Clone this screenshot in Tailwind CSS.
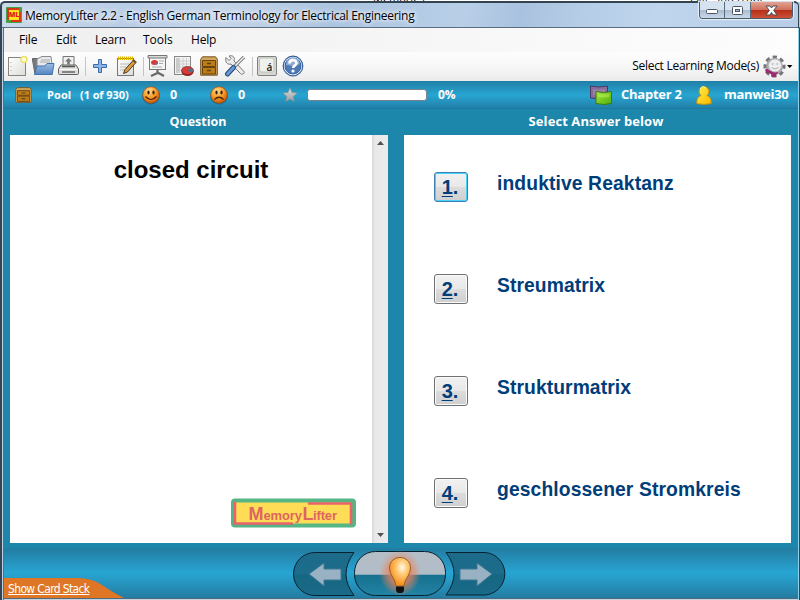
<!DOCTYPE html>
<html lang="en">
<head>
<meta charset="utf-8">
<title>MemoryLifter 2.2</title>
<script src="https://cdn.jsdelivr.net/npm/@tailwindcss/browser@4"></script>
</head>
<body class="w-[800px] h-[600px] overflow-hidden bg-white font-['Open_Sans','Noto_Sans',sans-serif] text-xs text-black">
<svg class="absolute w-0 h-0" width="0" height="0">
  <defs>
    <linearGradient id="paper" x1="0" y1="0" x2="1" y2="1"><stop offset="0" stop-color="#fff"/><stop offset="1" stop-color="#dcdcd8"/></linearGradient>
    <linearGradient id="blue" x1="0" y1="0" x2="0" y2="1"><stop offset="0" stop-color="#9dbde4"/><stop offset="1" stop-color="#5584c0"/></linearGradient>
    <radialGradient id="face" cx=".4" cy=".25" r=".75"><stop offset="0" stop-color="#ffd98a"/><stop offset=".55" stop-color="#f69a26"/><stop offset="1" stop-color="#c85a08"/></radialGradient>
    <linearGradient id="star" x1="0" y1="0" x2="0" y2="1"><stop offset="0" stop-color="#e0e0e0"/><stop offset="1" stop-color="#969a9e"/></linearGradient>
    <linearGradient id="gold" x1="0" y1="0" x2="1" y2="1"><stop offset="0" stop-color="#fff04a"/><stop offset="1" stop-color="#f8b800"/></linearGradient>
    <linearGradient id="green" x1="0" y1="0" x2="1" y2="1"><stop offset="0" stop-color="#a4e83a"/><stop offset="1" stop-color="#4fae0c"/></linearGradient>
    <radialGradient id="bulb" cx=".6" cy=".35" r=".6"><stop offset="0" stop-color="#fffbe8"/><stop offset=".4" stop-color="#ffcc7c"/><stop offset="1" stop-color="#f8921c"/></radialGradient>
    <radialGradient id="glow"><stop offset="0" stop-color="#ff8a50" stop-opacity="1"/><stop offset=".55" stop-color="#f08058" stop-opacity=".7"/><stop offset="1" stop-color="#e88a60" stop-opacity="0"/></radialGradient>
    <linearGradient id="side" x1="0" y1="0" x2="0" y2="1"><stop offset="0" stop-color="#1d6a89"/><stop offset=".5" stop-color="#1c6c8c"/><stop offset=".52" stop-color="#166782"/><stop offset="1" stop-color="#1a6a89"/></linearGradient>
    <linearGradient id="mid" x1="0" y1="0" x2="0" y2="1"><stop offset="0" stop-color="#b4bec6"/><stop offset=".52" stop-color="#b0bcc8"/><stop offset=".53" stop-color="#17708f"/><stop offset="1" stop-color="#2283a4"/></linearGradient>
    <symbol id="cabinet" viewBox="0 0 18 20" preserveAspectRatio="none">
      <path d="M2.5.8h13l1.800 2.400v16H.7v-16z" fill="#d0a75e" stroke="#76521c"/>
      <path d="M2.500 4.500h13v6h-13zM2.500 11.500h13v6.500h-13z" fill="#bd7c16" stroke="#67430f"/>
      <path d="M7 7.500h4M7 14.500h4" stroke="#5d4520" stroke-width="1.500"/>
    </symbol>
  </defs>
</svg>
<div class="w-[800px] h-[600px] flex flex-col bg-[#c4d6ea]">
  <!-- Title bar -->
  <div class="relative h-[28px] shrink-0 border-b border-[#5b6c80] bg-[linear-gradient(100deg,#cbd9e9_0%,#b9cde6_16%,#c5d5e9_28%,#abc4e0_42%,#b9cfe8_58%,#a9c2df_65%,#b5cce6_72%,#bfd5ee_82%,#b7cde7_100%)]">
    <div class="h-[2px] overflow-hidden bg-white relative">
      <span class="absolute left-[373px] -top-[8px] text-[11px] leading-none">Memories</span>
      <span class="absolute left-[690px] -top-[8px] text-[11px] leading-none">Exit &nbsp; Interrupt</span>
    </div>
    <div class="absolute left-0 top-[1px] w-[799px] h-[27px] rounded-t-[5px] border-t-2 border-l-2 border-r border-[#344350]"></div>
    <div class="flex items-center h-[25px] pl-[6px] pt-[3px]">
      <svg class="-mt-[2px]" width="16" height="16" viewBox="0 0 16 16"><rect width="16" height="16" rx="1" fill="#43a047"/><path d="M1 1h12v2H3v10H1z" fill="#d93416"/><path d="M13 5h2v10H5v-2h8z" fill="#d93416"/><path d="M3 3h10v10H3z" fill="#ffe01c"/><text x="2.800" y="10" font-family="Open Sans" font-size="6.800" font-weight="800" fill="#e02010">ML</text></svg>
      <span class="ml-[3px] whitespace-nowrap text-[12px] tracking-[-0.27px] [text-shadow:0_0_4px_#fff,0_0_6px_#fff]">MemoryLifter 2.2 - English German Terminology for Electrical Engineering</span>
    </div>
    <div class="absolute left-[699px] top-[2px] w-[94px] h-[17px] flex rounded-b-[4px] border border-t-0 border-[#4c5a69] overflow-hidden shadow-[0_0_1px_1px_#e8f1fa]">
      <div class="w-[25px] flex items-center justify-center border-r border-[#5b6a7b] bg-[linear-gradient(#d6e2ef_0_48%,#a9bccf_50%,#c8d9e9)]"><svg width="14" height="7" class="mt-[3px]"><rect x="1.500" y="1.500" width="11" height="4" rx="1" fill="#fff" stroke="#4c5565"/></svg></div>
      <div class="w-[26px] flex items-center justify-center border-r border-[#5b6a7b] bg-[linear-gradient(#d6e2ef_0_48%,#a9bccf_50%,#c8d9e9)]"><svg width="13" height="11"><rect x="1.500" y="1.500" width="10" height="8" rx="1" fill="#fff" stroke="#4c5565"/><rect x="4.500" y="4.500" width="4" height="2" fill="#a9bccf" stroke="#4c5565"/></svg></div>
      <div class="flex-1 flex items-center justify-center bg-[linear-gradient(#e2a393_0%,#cf705c_48%,#b52e19_50%,#cc5136)]"><svg width="13" height="11" viewBox="0 0 13 11"><path d="M1 1h4l1.500 2L8 1h4L8.700 5.400 12 10H8L6.500 7.500 5 10H1l3.300-4.600z" fill="#fff" stroke="#54494f"/></svg></div>
    </div>
  </div>

  <div class="flex-1 flex min-h-0">
    <div class="w-[4px] shrink-0 border-l-2 border-[#354452] bg-[#bfd0e3] border-r border-r-[#5b6c80]"></div>
    <div class="w-[794px] flex flex-col">
      <!-- Menu -->
      <div class="h-[24px] flex items-center bg-[linear-gradient(90deg,#efefef,#fdfdfd)] text-[12px]">
        <span class="ml-[15px] w-[37px] tracking-[-0.2px]">File</span><span class="w-[39px] tracking-[-0.2px]">Edit</span><span class="w-[48px] tracking-[-0.2px]">Learn</span><span class="w-[48px]">Tools</span><span class="tracking-[-0.2px]">Help</span>
      </div>
      <!-- Toolbar -->
      <div class="h-[29px] flex items-center bg-[linear-gradient(#fdfdfd,#f7f7f7_50%,#ebebeb)]">
        <svg class="ml-[3px] -mt-px" width="22" height="22" viewBox="0 0 22 22"><rect x="1.500" y="2.500" width="17" height="18" fill="url(#paper)" stroke="#858580"/><path d="M4 7v1M4 11v1M4 15v1" stroke="#aaa"/><circle cx="17" cy="4.500" r="3" fill="#fffbd0" stroke="#eedf67" stroke-width="1.400"/></svg>
        <svg class="ml-[2px] -mt-[2px]" width="24" height="22" viewBox="0 0 24 22"><path d="M1.500 5V3.500H8L10 5v14H4z" fill="#777b7e" stroke="#62666a"/><path d="M6 14V4l5-2.500h9l1 8" fill="#e7e9eb" stroke="#8a8d90"/><path d="M9 7h10M10 5h9" stroke="#aaa"/><path d="M3.500 19.500L6 11h8l2-2.500h7l-1.800 11z" fill="url(#blue)" stroke="#4472ab"/></svg>
        <svg class="ml-[3px] -mt-px" width="22" height="22" viewBox="0 0 22 22"><path d="M5 12V1.500h11V12" fill="#f0f0ee" stroke="#777"/><path d="M10.500 3l3.500 3.500h-2.200v3H9.200v-3H7z" fill="#777"/><path d="M3 10h15l2.500 4v4.500q0 1-1 1h-18q-1 0-1-1V14z" fill="#dededc" stroke="#626262"/><path d="M4 11.500h13" stroke="#555" stroke-width="1.500"/><path d="M1.500 14.500h18" stroke="#f8f8f8"/><path d="M4 17h13" stroke="#858585" stroke-width="2"/></svg>
        <i class="ml-[5px] w-px h-[19px] bg-[#c4c4c4]"></i>
        <svg class="ml-[7px] -mt-px" width="16" height="16" viewBox="0 0 16 16"><path d="M5.500 1.500h3v5h5v3h-5v5h-3v-5h-5v-3h5z" fill="#8eb5e5" stroke="#3d6ba9"/></svg>
        <svg class="ml-[7px] -mt-[2px]" width="22" height="22" viewBox="0 0 22 22"><rect x="1.500" y="3.500" width="16" height="17" fill="url(#paper)" stroke="#777"/><path d="M2.500 5V1.500M4.500 5V1.500M6.500 5V1.500M8.500 5V1.500M10.500 5V1.500M12.500 5V1.500M14.500 5V1.500M16.500 5V1.500" stroke="#e0b800" stroke-width="1.200"/><path d="M4 9h9M4 12h6M4 15h5" stroke="#bbb"/><path d="M17.500 5l2.500 2.500L11.500 17l-4 1.500L9 14.500z" fill="#d79b43" stroke="#50371c"/><path d="M17 5l3 2.500" stroke="#6b4a2a" stroke-width="2"/></svg>
        <i class="ml-[5px] w-px h-[19px] bg-[#c4c4c4]"></i>
        <svg class="ml-[3px] -mt-px" width="22" height="22" viewBox="0 0 22 22"><path d="M10.500 14v4L4 21M10.500 17.500l6.500 3.500" stroke="#686a66" stroke-width="2.200" fill="none"/><rect x="2.500" y="2.500" width="16" height="12" fill="#f5f5f3" stroke="#777"/><path d="M1 .5h19v2.500H1z" fill="#d9d9d7" stroke="#777"/><ellipse cx="7.500" cy="7.500" rx="3.500" ry="2.500" fill="#d63a36"/><path d="M7.500 7.500l3.500 1-2 1.500z" fill="#4d79bb"/><path d="M12 6h5M12 8.500h4M5 12h10" stroke="#aaa"/></svg>
        <svg class="ml-[4px] -mt-px" width="22" height="22" viewBox="0 0 22 22"><rect x="1.500" y="1.500" width="16" height="18" fill="#f2f2f0" stroke="#888"/><path d="M3 3h3v15H3z" fill="#ccc"/><path d="M3 6h14M3 9h14M3 12h14M3 15h14M6.500 3v15M10 3v15M13.500 3v15" stroke="#c5c5c5" stroke-width=".8"/><ellipse cx="14.500" cy="17" rx="6" ry="4" fill="#8f201f"/><ellipse cx="14.500" cy="15.500" rx="6" ry="4" fill="#d33c37" stroke="#862424" stroke-width=".7"/><path d="M14.500 15.500l4-2.800 2 3-2 2z" fill="#526f8b"/></svg>
        <svg class="ml-[5px] -mt-px" width="18" height="20"><use href="#cabinet" width="18" height="20"/></svg>
        <svg class="ml-[6px] -mt-px" width="22" height="22" viewBox="0 0 22 22"><path d="M2 2.500l3 3 2-2-2-2.500c4-1 6 1 5 5l9.500 10c2 2-1 4.500-3 2.500L7 9c-4 1-6-2-5-6.500z" fill="#ececea" stroke="#777"/><path d="M20 2L11 11" stroke="#777" stroke-width="3.200"/><path d="M20 2L11 11" stroke="#f2f2f2" stroke-width="1.400"/><path d="M9.500 12.500L3.500 19" stroke="#274f87" stroke-width="5" stroke-linecap="round"/><path d="M9.500 12.500L3.500 19" stroke="#6c9bd1" stroke-width="2.600" stroke-linecap="round"/></svg>
        <i class="ml-[6px] w-px h-[19px] bg-[#c4c4c4]"></i>
        <svg class="ml-[4px] -mt-px" width="20" height="20" viewBox="0 0 20 20"><rect x=".5" y=".5" width="19" height="19" rx="1.500" fill="#d5d7d2" stroke="#80827e"/><rect x="2.500" y="2" width="14.500" height="14" rx="2" fill="#eff1ed" stroke="#bdc0ba"/><text x="9.500" y="14.500" font-family="Open Sans" font-weight="600" font-size="10" fill="#111">á</text></svg>
        <svg class="ml-[5px] -mt-px" width="22" height="22" viewBox="0 0 22 22"><circle cx="11" cy="11" r="9.800" fill="#fff" stroke="#335c99" stroke-width="1.200"/><circle cx="11" cy="11" r="8" fill="#4f7ab8" stroke="#355f9c"/><path d="M4 10a7 7 0 0 1 14-1q-5 3-14 1z" fill="#8facd5"/><path d="M7.500 8.500C7.500 4 14.500 4.200 14.500 8c0 2.800-3.400 2.500-3.400 5" fill="none" stroke="#fff" stroke-width="2.600"/><circle cx="11" cy="16" r="1.600" fill="#fff"/></svg>
        <span class="ml-auto mr-[4px] -mt-px text-[12px] whitespace-nowrap tracking-[-0.27px]">Select Learning Mode(s)</span>
        <svg width="23" height="23" viewBox="0 0 23 23"><g fill="none"><circle cx="11.500" cy="11.500" r="9" stroke="#77737a" stroke-width="4" stroke-dasharray="4 3.070" stroke-dashoffset="2"/><circle cx="11.500" cy="11.500" r="7" stroke="#a8a4aa" stroke-width="3"/></g><path d="M3.500 13.500L2 15l1.500 3.500 2.500-.5 2 1 .5 3h4.500l.5-3 2-1-3-2-6-.5z" fill="#9c2a6c"/><circle cx="12" cy="10.500" r="6.500" fill="#eeedef" stroke="#bbb"/><path d="M9.800 8v2M14.200 8v2" stroke="#aaa"/><path d="M8.500 12.500q3.500 3 7 0" stroke="#aaa" fill="none"/></svg>
        <svg class="ml-px mr-[5px]" width="6" height="4"><path d="M0 0h5.500L2.750 3z"/></svg>
      </div>
      <!-- Status bar -->
      <div class="h-[28px] flex items-center bg-[linear-gradient(#217fa6,#28a5d2_50%,#2181aa_95%,#1c769a)] text-white font-bold">
        <svg class="ml-[11px]" width="17" height="16"><use href="#cabinet" width="17" height="16"/></svg>
        <span class="ml-[15px] w-[33px] text-[11px] tracking-[0.1px]">Pool</span>
        <span class="w-[62px] text-[11px] whitespace-nowrap tracking-[-0.08px]">(1 of 930)</span>
        <svg width="18" height="19" viewBox="0 0 18 19"><ellipse cx="9" cy="10" rx="9" ry="8.500" fill="#205977" opacity=".6"/><circle cx="9" cy="9" r="8.300" fill="url(#face)" stroke="#a44a0b" stroke-width=".7"/><ellipse cx="6.500" cy="6.500" rx="1.100" ry="2.100" fill="#351a0b"/><ellipse cx="11.500" cy="6.500" rx="1.100" ry="2.100" fill="#351a0b"/><path d="M3.500 10.500q5.500 6 11 0" stroke="#4b200a" stroke-width="1.200" fill="none"/></svg>
        <span class="ml-[10px] w-[40px] text-[12.500px]">0</span>
        <svg width="18" height="19" viewBox="0 0 18 19"><ellipse cx="9" cy="10" rx="9" ry="8.500" fill="#205977" opacity=".6"/><circle cx="9" cy="9" r="8.300" fill="url(#face)" stroke="#a44a0b" stroke-width=".7"/><ellipse cx="6.500" cy="6.500" rx="1.100" ry="2.100" fill="#351a0b"/><ellipse cx="11.500" cy="6.500" rx="1.100" ry="2.100" fill="#351a0b"/><path d="M4.500 13.500q4.500-4.500 9 0" stroke="#4b200a" stroke-width="1.200" fill="none"/></svg>
        <span class="ml-[10px] w-[44px] text-[12.500px]">0</span>
        <svg width="16" height="16" viewBox="0 0 16 16"><path d="M8 .8l2 4.800 5.200.5-4 3.500 1.200 5.200L8 12.100l-4.400 2.700 1.200-5.200-4-3.500L6 5.600z" fill="url(#star)" stroke="#888" stroke-width=".5"/></svg>
        <div class="ml-[9px] w-[120px] h-[12px] rounded-[3px] border border-[#79838a] bg-white"></div>
        <span class="ml-[11px] text-[12px] tracking-[-0.2px]">0%</span>
        <svg class="ml-auto" width="22" height="20" viewBox="0 0 22 20"><path d="M.5 1q8 2 17 0v12q-9 2-17 0z" fill="#866c9b" stroke="#4c3961"/><path d="M3 4q5 1 12 0v6q-6 1-12 0z" fill="#b398b8" opacity=".45"/><path d="M6 6.500q7 2 15.500 0v12q-8 2-15.500 0z" fill="url(#green)" stroke="#3c7617"/><path d="M8 9q6 1 11 0v3q-6 1-11 0z" fill="#caff65" opacity=".4"/></svg>
        <span class="ml-[9px] w-[75px] text-[13px] whitespace-nowrap tracking-[-0.25px]">Chapter 2</span>
        <svg width="16" height="20" viewBox="0 0 16 20"><path d="M.8 18.700Q.2 12 5 10.500a5 5 0 1 1 6 0q4.800 1.500 4.200 8.200-7 1.400-14.400 0z" fill="url(#gold)" stroke="#c18b08" stroke-width=".9"/><path d="M4 4q2-4 6-1" stroke="#ffffa0" fill="none"/></svg>
        <span class="ml-[12px] w-[74px] text-[13px] tracking-[-0.3px]">manwei30</span>
      </div>
      <!-- Card area -->
      <div class="h-[439px] flex flex-col bg-[#1c86ab]">
        <div class="h-[26px] flex items-center text-white font-bold">
          <span class="ml-[5px] w-[378px] text-center text-[12.500px]">Question</span><span class="ml-[16px] w-[386px] text-center text-[13px] tracking-[0.08px]">Select Answer below</span>
        </div>
        <div class="h-[408px] flex pl-[6px] gap-[16px] font-['Liberation_Sans',Arial,sans-serif] font-bold">
          <div class="w-[378px] flex bg-white">
            <div class="w-[362px] flex flex-col justify-between">
              <h1 class="mt-[21px] text-center text-[24px] leading-[28px]">closed circuit</h1>
              <svg class="self-end mr-[16px] mb-[15px]" width="125" height="30" viewBox="0 0 125 30"><rect x="0" y=".5" width="125" height="29" rx="4" fill="#55b584"/><rect x="5" y="4.500" width="115" height="21" fill="#ffdc55"/><path d="M4 4.500v21h57" fill="none" stroke="#e8636a" stroke-width="2.600" stroke-linecap="round"/><path d="M78 5.500h42v20" fill="none" stroke="#e8636a" stroke-width="2.600" stroke-linecap="round"/><text y="22" font-family="Liberation Sans" font-weight="700" fill="#dd6562"><tspan x="17.500" font-size="18">M</tspan><tspan font-size="13" textLength="38.500" x="32.500">emory</tspan><tspan font-size="18" x="71.500">L</tspan><tspan font-size="13" x="82" textLength="24">ifter</tspan></text></svg>
            </div>
            <div class="w-[16px] flex flex-col justify-between items-center py-[6px] bg-[linear-gradient(90deg,#d8d8d8,#e9e9e9_20%,#ebebeb)]">
              <svg width="7" height="4"><path d="M0 4L3.500 0 7 4z" fill="#505050"/></svg>
              <svg width="7" height="4"><path d="M0 0h7L3.500 4z" fill="#505050"/></svg>
            </div>
          </div>
          <div class="w-[387px] flex flex-col bg-white text-[#003d79]">
            <div class="h-[102px] flex pl-[30px] pt-[37px]"><button class="w-[34px] h-[30px] rounded-[3px] border border-[#3c7fb1] shadow-[inset_0_0_0_1px_#48d2f8] bg-[linear-gradient(#f1f1f1_0%,#e8e8e8_50%,#dcdcdc_51%,#cfcfcf)] font-bold text-[20px] leading-[28px] pr-[2px]"><u class="underline-offset-2 decoration-1">1</u>.</button><span class="ml-[29px] leading-[24px] text-[19.300px] tracking-[0.11px]">induktive Reaktanz</span></div>
            <div class="h-[102px] flex pl-[30px] pt-[37px]"><button class="w-[34px] h-[30px] rounded-[3px] border border-[#707070] shadow-[inset_0_0_0_1px_#fafafa] bg-[linear-gradient(#f1f1f1_0%,#e8e8e8_50%,#dcdcdc_51%,#cfcfcf)] font-bold text-[20px] leading-[28px] pr-[2px]"><u class="underline-offset-2 decoration-1">2</u>.</button><span class="ml-[29px] leading-[24px] text-[19.300px] tracking-[0.08px]">Streumatrix</span></div>
            <div class="h-[102px] flex pl-[30px] pt-[37px]"><button class="w-[34px] h-[30px] rounded-[3px] border border-[#707070] shadow-[inset_0_0_0_1px_#fafafa] bg-[linear-gradient(#f1f1f1_0%,#e8e8e8_50%,#dcdcdc_51%,#cfcfcf)] font-bold text-[20px] leading-[28px] pr-[2px]"><u class="underline-offset-2 decoration-1">3</u>.</button><span class="ml-[29px] leading-[24px] text-[19.300px] tracking-[0.08px]">Strukturmatrix</span></div>
            <div class="h-[102px] flex pl-[30px] pt-[37px]"><button class="w-[34px] h-[30px] rounded-[3px] border border-[#707070] shadow-[inset_0_0_0_1px_#fafafa] bg-[linear-gradient(#f1f1f1_0%,#e8e8e8_50%,#dcdcdc_51%,#cfcfcf)] font-bold text-[20px] leading-[28px] pr-[2px]"><u class="underline-offset-2 decoration-1">4</u>.</button><span class="ml-[29px] leading-[24px] text-[19.300px] tracking-[0.11px]">geschlossener Stromkreis</span></div>
          </div>
        </div>
      </div>
      <!-- Navigation bar -->
      <div class="relative h-[50px] bg-[linear-gradient(#237ca1,#28a5d3_50%,#237ca1)]">
        <div class="absolute left-0 bottom-0 w-[120px] h-[20px]">
          <svg class="absolute inset-0" width="120" height="20"><path d="M0 0h74Q88 0 98 7t22 13H0z" fill="#de7626"/></svg>
          <span class="relative block pl-[4px] pt-[3px] leading-[16px] text-[12px] text-white underline whitespace-nowrap font-['DejaVu_Sans_Condensed','DejaVu_Sans',sans-serif] tracking-[-0.65px]">Show Card Stack</span>
        </div>
        <svg class="ml-[284px]" width="226" height="50" viewBox="288 548 226 50">
          <path d="M354 552.500H315a21.500 21.500 0 0 0 0 43h39q-16-21.500 0-43z" fill="url(#side)" stroke="#062331"/>
          <path d="M446 552.500H485a21.300 21.300 0 0 1 0 42.500h-39q16-21.500 0-42.500z" fill="url(#side)" stroke="#062331"/>
          <path d="M309 574l15-11v6h17v11h-17v6z" fill="#98b2c4" stroke="#3d7893"/>
          <path d="M492 574l-15-11v6h-17v11h17v6z" fill="#98b2c4" stroke="#3d7893"/>
          <rect x="354.500" y="551.500" width="91" height="44" rx="21" fill="url(#mid)" stroke="#06212e"/>
          <ellipse cx="400" cy="573" rx="21" ry="23" fill="url(#glow)"/>
          <path d="M396 586q-.5-5-4-10-2.500-4-2.500-8c0-14 21-14 21 0q0 4-2.500 8-3.500 5-4 10z" fill="url(#bulb)" stroke="#8e622c"/>
          <path d="M396 586.500h8v4.500l-2 2h-4l-2-2z" fill="#111"/>
        </svg>
      </div>
      <div class="h-[2px] bg-[#c2d4e4] border-t border-[#536a7c]"></div>
    </div>
    <div class="w-[2px] bg-[#91cfe8] border-r border-[#344350]"></div>
  </div>
</div>
</body>
</html>
